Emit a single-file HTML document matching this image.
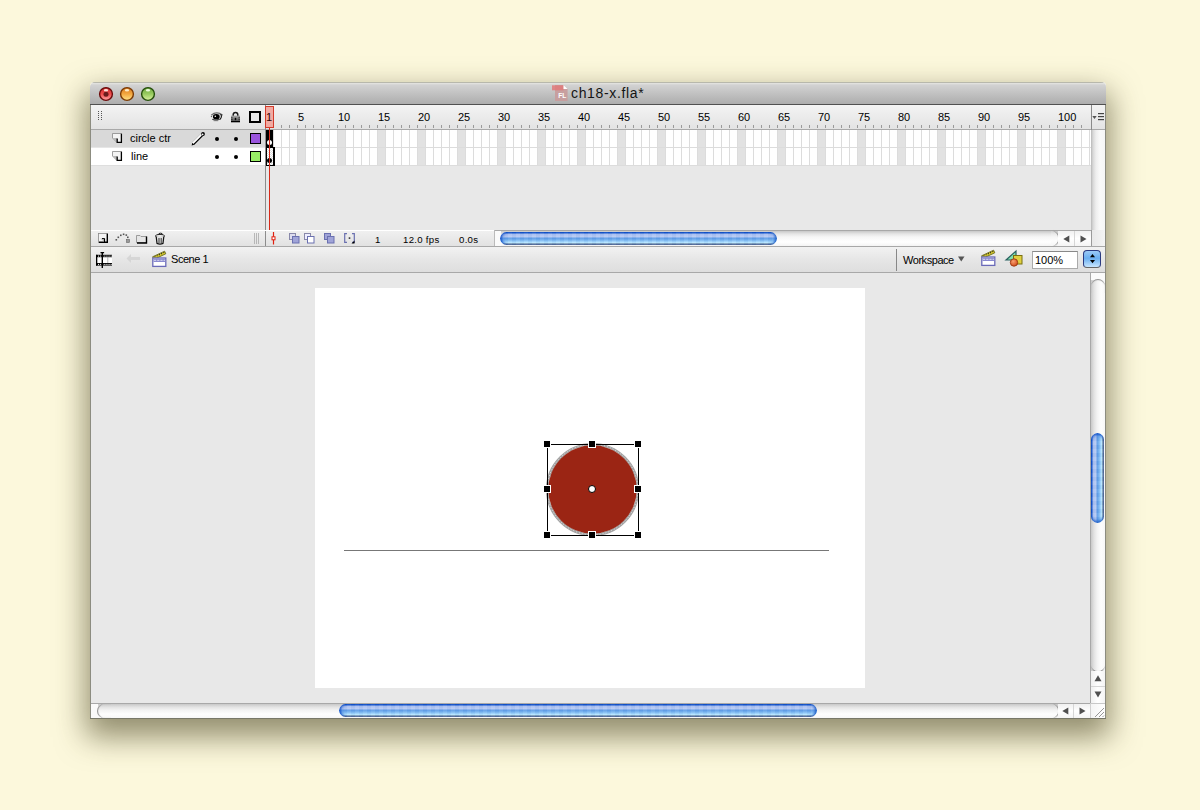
<!DOCTYPE html>
<html><head><meta charset="utf-8"><style>
*{margin:0;padding:0;box-sizing:border-box}
html,body{width:1200px;height:810px;overflow:hidden;background:#fcf8dc;font-family:"Liberation Sans",sans-serif;font-size:11px;color:#000}
.a{position:absolute}
svg{position:absolute;overflow:visible}
#shadow{left:90px;top:82px;width:1016px;height:637px;box-shadow:0 14px 30px 4px rgba(60,55,20,0.55);border-radius:4px 4px 0 0}
#win{left:91px;top:82px;width:1015px;height:637px;background:#e8e8e8;border-radius:4px 4px 0 0;overflow:hidden}
.tb{width:14px;height:14px;border-radius:50%;top:87px}
.t11{font-size:11px;line-height:13px;white-space:nowrap}
.t10{font-size:10px;line-height:12px;white-space:nowrap}
</style></head><body>
<div class="a" id="shadow"></div>
<div class="a" id="win"></div>
<div class="a" style="left:90px;top:105px;width:1px;height:614px;background:#8c8c80"></div>
<div class="a" style="left:1105px;top:105px;width:1px;height:614px;background:#8c8c80"></div>
<div class="a" style="left:90px;top:718px;width:1016px;height:1px;background:#777768"></div>
<div class="a" style="left:90px;top:82px;width:1016px;height:23px;background:linear-gradient(#b8b8ac 0,#b8b8ac 1px,#e6e6e2 1px,#d2d2d2 3px,#adadad);border-bottom:1px solid #505050;border-radius:5px 5px 0 0"></div>
<svg style="left:99px;top:87px" width="14" height="14" viewBox="0 0 14 14"><defs><linearGradient id="g99" x1="0" y1="0" x2="0" y2="1"><stop offset="0" stop-color="#c83030"/><stop offset=".5" stop-color="#f04a4a"/><stop offset="1" stop-color="#ffa8a8"/></linearGradient></defs><circle cx="7" cy="7" r="6.4" fill="url(#g99)" stroke="#6a0c0c" stroke-width="1.4"/><ellipse cx="7" cy="3.3" rx="2.2" ry="1.3" fill="#ffe8e0" opacity=".95"/><circle cx="7" cy="7.3" r="2.5" fill="#6a1c1c"/></svg>
<svg style="left:120px;top:87px" width="14" height="14" viewBox="0 0 14 14"><defs><linearGradient id="g120" x1="0" y1="0" x2="0" y2="1"><stop offset="0" stop-color="#d87a20"/><stop offset=".5" stop-color="#f4a840"/><stop offset="1" stop-color="#ffe488"/></linearGradient></defs><circle cx="7" cy="7" r="6.4" fill="url(#g120)" stroke="#7a3a06" stroke-width="1.4"/><ellipse cx="7" cy="3.3" rx="2.2" ry="1.3" fill="#fff0d0" opacity=".95"/></svg>
<svg style="left:141px;top:87px" width="14" height="14" viewBox="0 0 14 14"><defs><linearGradient id="g141" x1="0" y1="0" x2="0" y2="1"><stop offset="0" stop-color="#70a840"/><stop offset=".5" stop-color="#98cc60"/><stop offset="1" stop-color="#dcf2a0"/></linearGradient></defs><circle cx="7" cy="7" r="6.4" fill="url(#g141)" stroke="#244e0c" stroke-width="1.4"/><ellipse cx="7" cy="3.3" rx="2.2" ry="1.3" fill="#f0ffe0" opacity=".95"/></svg>
<svg style="left:549px;top:83px" width="22" height="20" viewBox="0 0 22 20"><path d="M6 2H14.5L18.6 6.1V18H6Z" fill="#c89c9c" opacity=".92"/><rect x="3" y="2.3" width="11.5" height="5" fill="#e07a7a" opacity=".85"/><path d="M14.5 2V6.1H18.6Z" fill="#fff"/><text x="9.3" y="15.2" font-family="Liberation Sans" font-size="6.6" font-weight="bold" fill="#fff">FL</text></svg>
<div class="a" style="left:571px;top:85px;font-size:14px;letter-spacing:0.65px;line-height:16px;color:#141414">ch18-x.fla*</div>
<div class="a" style="left:91px;top:105px;width:1000px;height:24px;background:linear-gradient(#f3f3f3,#e3e3e3)"></div>
<div class="a" style="left:91px;top:129px;width:1000px;height:1px;background:#a9a9a9"></div>
<svg style="left:97px;top:110px" width="6" height="11" viewBox="0 0 6 11"><rect x="1" y="1" width="1" height="1" fill="#555"/><rect x="1" y="3" width="1" height="1" fill="#555"/><rect x="1" y="5" width="1" height="1" fill="#555"/><rect x="1" y="7" width="1" height="1" fill="#555"/><rect x="1" y="9" width="1" height="1" fill="#555"/><rect x="4" y="1" width="1" height="1" fill="#555"/><rect x="4" y="3" width="1" height="1" fill="#555"/><rect x="4" y="5" width="1" height="1" fill="#555"/><rect x="4" y="7" width="1" height="1" fill="#555"/><rect x="4" y="9" width="1" height="1" fill="#555"/></svg>
<div class="a" style="left:1091px;top:105px;width:1px;height:25px;background:#8a8a8a"></div>
<div class="a" style="left:1092px;top:105px;width:13px;height:24px;background:linear-gradient(#f3f3f3,#e3e3e3)"></div>
<div class="a" style="left:1092px;top:129px;width:13px;height:1px;background:#a9a9a9"></div>
<div class="a" style="left:1091px;top:130px;width:14px;height:100px;background:linear-gradient(to right,#b8b8b8,#d8d8d8 2px,#eeeeee 5px,#fafafa 9px,#f6f6f6)"></div>
<svg style="left:1092px;top:112px" width="13" height="9" viewBox="0 0 13 9"><path d="M0.3 4H4.7L2.5 7Z" fill="#555"/><rect x="6" y="1" width="6" height="1.2" fill="#444"/><rect x="6" y="4" width="6" height="1.2" fill="#444"/><rect x="6" y="7" width="6" height="1.2" fill="#444"/></svg>
<svg style="left:209px;top:110px" width="16" height="13" viewBox="0 0 16 13"><path d="M2.3 5.2Q7.6 0.6 13.6 5.2" stroke="#6a6a6a" stroke-width="1.4" fill="none"/><path d="M3.6 5Q7.6 2.6 11.8 4.6" stroke="#aaa" stroke-width="0.7" fill="none"/><ellipse cx="7.3" cy="6.7" rx="3.4" ry="2.8" fill="#000"/><circle cx="6.3" cy="6.3" r="0.8" fill="#fff"/><path d="M11.6 4.2Q13.6 6.8 10.8 9.6" stroke="#111" stroke-width="1.1" fill="none"/><path d="M3.2 9.3Q7 11.2 10.8 9.3" stroke="#222" stroke-width="0.9" fill="none"/><path d="M4.6 10.7H9.2" stroke="#777" stroke-width="0.9"/><circle cx="2.4" cy="6.6" r="0.6" fill="#444"/></svg>
<svg style="left:231px;top:111px" width="10" height="12" viewBox="0 0 10 12"><path d="M2.2 5.2V3.7A2.3 2.3 0 0 1 6.8 3.7V5.2" stroke="#1a1a1a" stroke-width="1.5" fill="none"/><defs><linearGradient id="lg" x1="0" y1="0" x2="0" y2="1"><stop offset="0" stop-color="#a8a8a8"/><stop offset="1" stop-color="#4a4a4a"/></linearGradient></defs><rect x="0" y="4.6" width="9" height="6.4" fill="url(#lg)"/><path d="M0 6.8H1.6M0 8.6H1.6M7.4 6.8H9M7.4 8.6H9" stroke="#222" stroke-width="0.8"/><rect x="0" y="10" width="9" height="1.3" fill="#000"/><ellipse cx="4.5" cy="8" rx="0.8" ry="1.2" fill="#000"/></svg>
<div class="a" style="left:249px;top:111px;width:12px;height:12px;border:2px solid #000;background:#e8e8e8"></div>
<div class="a" style="left:91px;top:130px;width:174px;height:17px;background:#d9d9d9"></div>
<div class="a" style="left:91px;top:147px;width:174px;height:1px;background:#e6e6e6"></div>
<div class="a" style="left:91px;top:148px;width:174px;height:17px;background:#fff"></div>
<div class="a" style="left:91px;top:165px;width:174px;height:1px;background:#dedede"></div>
<div class="a t11" style="left:130px;top:132px">circle ctr</div>
<div class="a t11" style="left:131px;top:150px">line</div>
<svg style="left:112px;top:133px" width="10" height="10" viewBox="0 0 10 10"><path d="M0.5 0.5H9.5V9.5H5L0.5 5Z" fill="#f4f4f4" stroke="#888" stroke-width="0.8"/><path d="M0.5 5H5V9.5Z" fill="#b8b8b8"/><path d="M9.4 0.8V9.4H5.2V5.4" stroke="#000" stroke-width="1.3" fill="none"/></svg>
<svg style="left:112px;top:151px" width="10" height="10" viewBox="0 0 10 10"><path d="M0.5 0.5H9.5V9.5H5L0.5 5Z" fill="#f4f4f4" stroke="#888" stroke-width="0.8"/><path d="M0.5 5H5V9.5Z" fill="#b8b8b8"/><path d="M9.4 0.8V9.4H5.2V5.4" stroke="#000" stroke-width="1.3" fill="none"/></svg>
<svg style="left:190px;top:131px" width="16" height="16" viewBox="0 0 16 16"><path d="M2.6 12.4L12.4 2.6" stroke="#fff" stroke-width="2.4"/><path d="M1.9 11.6L11.6 1.9" stroke="#aaa" stroke-width="0.7"/><path d="M3.6 13.6L13.6 3.6" stroke="#000" stroke-width="1.3"/><path d="M1.6 14.4L2.3 11.8L4.2 13.7Z" fill="#000"/><circle cx="13" cy="3" r="1.9" fill="#000"/><circle cx="12.6" cy="3.4" r="0.9" fill="#fff"/></svg>
<div class="a" style="left:266px;top:130px;width:825px;height:36px;background:#fff"></div>
<div class="a" style="left:297px;top:130px;width:9px;height:35px;background:#e2e2e2"></div>
<div class="a" style="left:337px;top:130px;width:9px;height:35px;background:#e2e2e2"></div>
<div class="a" style="left:377px;top:130px;width:9px;height:35px;background:#e2e2e2"></div>
<div class="a" style="left:417px;top:130px;width:9px;height:35px;background:#e2e2e2"></div>
<div class="a" style="left:457px;top:130px;width:9px;height:35px;background:#e2e2e2"></div>
<div class="a" style="left:497px;top:130px;width:9px;height:35px;background:#e2e2e2"></div>
<div class="a" style="left:537px;top:130px;width:9px;height:35px;background:#e2e2e2"></div>
<div class="a" style="left:577px;top:130px;width:9px;height:35px;background:#e2e2e2"></div>
<div class="a" style="left:617px;top:130px;width:9px;height:35px;background:#e2e2e2"></div>
<div class="a" style="left:657px;top:130px;width:9px;height:35px;background:#e2e2e2"></div>
<div class="a" style="left:697px;top:130px;width:9px;height:35px;background:#e2e2e2"></div>
<div class="a" style="left:737px;top:130px;width:9px;height:35px;background:#e2e2e2"></div>
<div class="a" style="left:777px;top:130px;width:9px;height:35px;background:#e2e2e2"></div>
<div class="a" style="left:817px;top:130px;width:9px;height:35px;background:#e2e2e2"></div>
<div class="a" style="left:857px;top:130px;width:9px;height:35px;background:#e2e2e2"></div>
<div class="a" style="left:897px;top:130px;width:9px;height:35px;background:#e2e2e2"></div>
<div class="a" style="left:937px;top:130px;width:9px;height:35px;background:#e2e2e2"></div>
<div class="a" style="left:977px;top:130px;width:9px;height:35px;background:#e2e2e2"></div>
<div class="a" style="left:1017px;top:130px;width:9px;height:35px;background:#e2e2e2"></div>
<div class="a" style="left:1057px;top:130px;width:9px;height:35px;background:#e2e2e2"></div>
<div class="a" style="left:265px;top:130px;width:826px;height:35px;background:repeating-linear-gradient(to right,#dcdcdc 0 1px,transparent 1px 8px)"></div>
<div class="a" style="left:265px;top:147px;width:826px;height:1px;background:#dcdcdc"></div>
<div class="a" style="left:265px;top:165px;width:826px;height:1px;background:#dcdcdc"></div>
<div class="a" style="left:281px;top:125px;width:801px;height:3px;background:repeating-linear-gradient(to right,#9a9a9a 0 1px,transparent 1px 8px)"></div>
<div class="a t11" style="left:298px;top:111px">5</div>
<div class="a t11" style="left:338px;top:111px">10</div>
<div class="a t11" style="left:378px;top:111px">15</div>
<div class="a t11" style="left:418px;top:111px">20</div>
<div class="a t11" style="left:458px;top:111px">25</div>
<div class="a t11" style="left:498px;top:111px">30</div>
<div class="a t11" style="left:538px;top:111px">35</div>
<div class="a t11" style="left:578px;top:111px">40</div>
<div class="a t11" style="left:618px;top:111px">45</div>
<div class="a t11" style="left:658px;top:111px">50</div>
<div class="a t11" style="left:698px;top:111px">55</div>
<div class="a t11" style="left:738px;top:111px">60</div>
<div class="a t11" style="left:778px;top:111px">65</div>
<div class="a t11" style="left:818px;top:111px">70</div>
<div class="a t11" style="left:858px;top:111px">75</div>
<div class="a t11" style="left:898px;top:111px">80</div>
<div class="a t11" style="left:938px;top:111px">85</div>
<div class="a t11" style="left:978px;top:111px">90</div>
<div class="a t11" style="left:1018px;top:111px">95</div>
<div class="a t11" style="left:1058px;top:111px">100</div>
<div class="a" style="left:265px;top:105px;width:1px;height:142px;background:#8c8c8c"></div>
<div class="a" style="left:266px;top:130px;width:7px;height:18px;background:#000"></div>
<div class="a" style="left:267px;top:140px;width:5px;height:5px;border-radius:50%;background:#fff"></div>
<div class="a" style="left:266px;top:147px;width:9px;height:19px;border:1px solid #000;border-right-width:2px;background:repeating-conic-gradient(#ddd 0 25%,#fff 0 50%) 0 0/2px 2px"></div>
<div class="a" style="left:267px;top:158px;width:5px;height:5px;border-radius:50%;background:#000"></div>
<div class="a" style="left:265px;top:106px;width:9px;height:22px;background:#f2aaa2;border:1px solid #d23a2a"></div>
<div class="a t11" style="left:266px;top:111px;color:#300">1</div>
<div class="a" style="left:269px;top:128px;width:1px;height:102px;background:#d82a1a"></div>
<div class="a" style="left:250px;top:133px;width:11px;height:11px;border:1px solid #000;background:#9a55dd"></div>
<div class="a" style="left:250px;top:151px;width:11px;height:11px;border:1px solid #000;background:#99ee66"></div>
<div class="a" style="left:215px;top:137px;width:4px;height:4px;border-radius:50%;background:#000"></div>
<div class="a" style="left:234px;top:137px;width:4px;height:4px;border-radius:50%;background:#000"></div>
<div class="a" style="left:215px;top:155px;width:4px;height:4px;border-radius:50%;background:#000"></div>
<div class="a" style="left:234px;top:155px;width:4px;height:4px;border-radius:50%;background:#000"></div>
<div class="a" style="left:91px;top:230px;width:1014px;height:17px;background:linear-gradient(#fff 0,#fff 1px,#f0f0f0 1px,#e2e2e2);border-bottom:1px solid #a8a8a8"></div>
<div class="a" style="left:265px;top:231px;width:1px;height:15px;background:#8c8c8c"></div>
<svg style="left:98px;top:233px" width="11" height="11" viewBox="0 0 11 11"><rect x="0.5" y="0.5" width="9" height="9" fill="#f4f4f4" stroke="#888" stroke-width="0.8"/><path d="M9.3 0.8V9.3H1" stroke="#000" stroke-width="1.4" fill="none"/><path d="M2 5.5H6.5V9L2 5.5Z" fill="#c8c8c8"/><path d="M6.5 5.5V9" stroke="#000" stroke-width="1.2"/><path d="M4 5.6H6.6" stroke="#000" stroke-width="1"/></svg>
<svg style="left:115px;top:232px" width="15" height="12" viewBox="0 0 15 12"><g fill="#555"><rect x="0.5" y="7" width="1.6" height="1.6"/><rect x="2.5" y="4.5" width="1.6" height="1.6"/><rect x="5" y="2.5" width="1.6" height="1.6"/><rect x="7.8" y="1.5" width="1.6" height="1.6"/><rect x="10.5" y="2.3" width="1.6" height="1.6"/><rect x="12" y="4.5" width="1.6" height="1.6"/></g><rect x="11.5" y="7.5" width="3" height="3" fill="#999" stroke="#666" stroke-width="0.6"/></svg>
<svg style="left:136px;top:234px" width="12" height="10" viewBox="0 0 12 10"><path d="M0.5 1.5H4L5 2.5H10.5V8.5H0.5Z" fill="#e6e6e6" stroke="#888" stroke-width="0.8"/><path d="M10.5 2.5V9H1" stroke="#000" stroke-width="1.4" fill="none"/></svg>
<svg style="left:155px;top:233px" width="11" height="12" viewBox="0 0 11 12"><path d="M3.5 1.5A2 1.3 0 0 1 7.5 1.5" stroke="#222" stroke-width="1" fill="none"/><ellipse cx="5" cy="3" rx="4.6" ry="1.6" fill="#eee" stroke="#222" stroke-width="1"/><path d="M1.2 3.6L2 10.4Q5 11.8 8 10.4L8.8 3.6" fill="#e0e0e0" stroke="#111" stroke-width="1.2"/><path d="M4 5V10M6.2 5V10" stroke="#222" stroke-width="0.9"/></svg>
<svg style="left:253px;top:233px" width="7" height="12" viewBox="0 0 7 12"><path d="M1.5 0V11M3.5 0V11M5.5 0V11" stroke="#aaa" stroke-width="0.8"/></svg>
<svg style="left:270px;top:232px" width="7" height="13" viewBox="0 0 7 13"><path d="M3.5 0V12.5" stroke="#e02010" stroke-width="1.2"/><rect x="2" y="4.8" width="3" height="3" fill="#fff" stroke="#e02010" stroke-width="1"/></svg>
<svg style="left:289px;top:233px" width="11" height="11" viewBox="0 0 11 11"><rect x="0.5" y="0.5" width="6" height="6" fill="#dde" stroke="#88a" stroke-width="1"/><rect x="3.5" y="3.5" width="6.5" height="6.5" fill="#a0a4d8" stroke="#6a70b0" stroke-width="1"/></svg>
<svg style="left:304px;top:233px" width="11" height="11" viewBox="0 0 11 11"><rect x="0.5" y="0.5" width="6" height="6" fill="#eef" stroke="#88a" stroke-width="1"/><rect x="3.5" y="3.5" width="6.5" height="6.5" fill="#fff" stroke="#6a70b0" stroke-width="1"/></svg>
<svg style="left:324px;top:233px" width="11" height="11" viewBox="0 0 11 11"><rect x="0.5" y="0.5" width="6" height="6" fill="#a0a4d8" stroke="#6a70b0" stroke-width="1"/><rect x="3.5" y="3.5" width="6.5" height="6.5" fill="#a0a4d8" stroke="#6a70b0" stroke-width="1"/></svg>
<svg style="left:344px;top:233px" width="11" height="11" viewBox="0 0 11 11"><path d="M3 0.7H0.7V9.3H3M8 0.7H10.3V9.3H8" stroke="#6a70b0" stroke-width="1.2" fill="none"/><rect x="4.7" y="4.3" width="1.6" height="1.6" fill="#333"/><path d="M7.5 10.5L10.5 7.5V10.5Z" fill="#000"/></svg>
<div class="a t10" style="left:375px;top:233.5px;font-size:9.6px;letter-spacing:0.3px">1</div>
<div class="a t10" style="left:403px;top:233.5px;font-size:9.6px;letter-spacing:0.3px">12.0 fps</div>
<div class="a t10" style="left:459px;top:233.5px;font-size:9.6px;letter-spacing:0.3px">0.0s</div>
<div class="a" style="left:494px;top:230px;width:597px;height:16px;background:linear-gradient(#a8a8a8 0,#a8a8a8 1px,#c8c8c8 1px,#e6e6e6 4px,#f6f6f6 7px,#fff 12px,#f4f4f4);border-left:1px solid #bbb"></div>
<div class="a" style="left:495px;top:231px;width:6px;height:15px;background:#fafafa"></div>
<div class="a" style="left:500px;top:232px;width:277px;height:13px;border-radius:7px;background:repeating-linear-gradient(to right,rgba(255,255,255,.06) 0 4px,rgba(0,50,150,.035) 4px 8px),linear-gradient(#0a48c0 0,#1a58cc 1px,#a8bef0 2px,#b8ccf4 5px,#5c9ae6 6px,#78b4f0 8px,#a8dcff 10px,#c0ecff 11px,#50607a 12px,#80889a 13px);box-shadow:inset 3px 0 3px -1px #1050c8,inset -3px 0 3px -1px #2060c8"></div>
<div class="a" style="left:91px;top:247px;width:1014px;height:25px;background:linear-gradient(#f2f2f2,#e6e6e6 50%,#dedede)"></div>
<div class="a" style="left:91px;top:272px;width:1014px;height:1px;background:#a8a8a8"></div>
<svg style="left:96px;top:252px" width="17" height="16" viewBox="0 0 17 16"><rect x="0.5" y="3" width="15.5" height="10.5" fill="#fff"/><rect x="0" y="2.8" width="16" height="2.4" fill="#000"/><rect x="0" y="11" width="16" height="2.6" fill="#000"/><rect x="0" y="2.8" width="1.3" height="10.8" fill="#000"/><g fill="#fff"><rect x="2.0" y="3.6" width="1.1" height="1"/><rect x="2.0" y="11.9" width="1.1" height="1"/><rect x="4.1" y="3.6" width="1.1" height="1"/><rect x="4.1" y="11.9" width="1.1" height="1"/><rect x="6.2" y="3.6" width="1.1" height="1"/><rect x="6.2" y="11.9" width="1.1" height="1"/><rect x="8.3" y="3.6" width="1.1" height="1"/><rect x="8.3" y="11.9" width="1.1" height="1"/><rect x="10.4" y="3.6" width="1.1" height="1"/><rect x="10.4" y="11.9" width="1.1" height="1"/><rect x="12.5" y="3.6" width="1.1" height="1"/><rect x="12.5" y="11.9" width="1.1" height="1"/><rect x="14.600000000000001" y="3.6" width="1.1" height="1"/><rect x="14.600000000000001" y="11.9" width="1.1" height="1"/></g><rect x="5.6" y="0.5" width="1.4" height="15.5" fill="#000"/><rect x="4.5" y="0" width="3.6" height="1.3" fill="#000"/><rect x="11.5" y="5.2" width="0.7" height="5.8" fill="#999"/></svg>
<svg style="left:126px;top:253px" width="15" height="11" viewBox="0 0 15 11"><path d="M0.5 5.5L5 1V4H14V7H5V10Z" fill="#d6d6d6"/></svg>
<svg style="left:152px;top:251px" width="15" height="17" viewBox="0 0 15 17"><path d="M0.6 5.8L12.6 0.2L13.8 2.8L1.8 8.4Z" fill="#d8cc30" stroke="#5a5a10" stroke-width="0.8"/><circle cx="3.0" cy="5.8" r="0.6" fill="#222"/><circle cx="5.2" cy="4.75" r="0.6" fill="#222"/><circle cx="7.4" cy="3.6999999999999997" r="0.6" fill="#222"/><circle cx="9.600000000000001" cy="2.6499999999999995" r="0.6" fill="#222"/><circle cx="11.8" cy="1.5999999999999996" r="0.6" fill="#222"/><rect x="0.8" y="7" width="13" height="8.4" fill="#fff" stroke="#6a6ab8" stroke-width="1.3"/><rect x="1.5" y="7.6" width="11.6" height="3.4" fill="#8a8ad0"/><path d="M2 9.3H13" stroke="#e4e4f4" stroke-width="0.9" stroke-dasharray="2.2 1"/></svg>
<div class="a t11" style="left:171px;top:253px;letter-spacing:-0.45px">Scene 1</div>
<div class="a" style="left:896px;top:249px;width:1px;height:22px;background:#888"></div>
<div class="a t11" style="left:903px;top:254px;letter-spacing:-0.45px">Workspace</div>
<svg style="left:958px;top:256px" width="7" height="6" viewBox="0 0 7 6"><path d="M0 0.5H6.5L3.25 5.5Z" fill="#555"/></svg>
<svg style="left:981px;top:250px" width="15" height="17" viewBox="0 0 15 17"><path d="M0.6 5.8L12.6 0.2L13.8 2.8L1.8 8.4Z" fill="#d8cc30" stroke="#5a5a10" stroke-width="0.8"/><circle cx="3.0" cy="5.8" r="0.6" fill="#222"/><circle cx="5.2" cy="4.75" r="0.6" fill="#222"/><circle cx="7.4" cy="3.6999999999999997" r="0.6" fill="#222"/><circle cx="9.600000000000001" cy="2.6499999999999995" r="0.6" fill="#222"/><circle cx="11.8" cy="1.5999999999999996" r="0.6" fill="#222"/><rect x="0.8" y="7" width="13" height="8.4" fill="#fff" stroke="#6a6ab8" stroke-width="1.3"/><rect x="1.5" y="7.6" width="11.6" height="3.4" fill="#8a8ad0"/><path d="M2 9.3H13" stroke="#e4e4f4" stroke-width="0.9" stroke-dasharray="2.2 1"/></svg>
<svg style="left:1005px;top:250px" width="18" height="18" viewBox="0 0 18 18"><path d="M1 10L11 1V10Z" fill="#80e0b0" stroke="#2a6060" stroke-width="1.2"/><rect x="8.5" y="5.5" width="8.5" height="8.5" fill="#e0d040" stroke="#7a7010" stroke-width="1"/><defs><radialGradient id="oc" cx=".4" cy=".35" r=".7"><stop offset="0" stop-color="#f8a070"/><stop offset="1" stop-color="#d04818"/></radialGradient></defs><circle cx="9" cy="12.5" r="3.7" fill="url(#oc)" stroke="#983810" stroke-width="0.9"/></svg>
<div class="a" style="left:1032px;top:251px;width:46px;height:18px;background:#fff;border:1px solid #aaa;border-top-color:#888"></div>
<div class="a t11" style="left:1035px;top:254px">100%</div>
<div class="a" style="left:1083px;top:250px;width:18px;height:18px;border-radius:4px;background:linear-gradient(#9ccaf6,#6aaef0 45%,#7ab8f2 55%,#c8e6ff);border:1px solid #2a3a80;border-bottom-color:#666"></div>
<svg style="left:1089px;top:253px" width="7" height="12" viewBox="0 0 7 12"><path d="M3.5 1L6 4.2H1Z" fill="#000"/><path d="M1 7H6L3.5 10.2Z" fill="#000"/></svg>
<div class="a" style="left:315px;top:288px;width:550px;height:400px;background:#fff"></div>
<div class="a" style="left:344px;top:550px;width:485px;height:1px;background:#777"></div>
<svg style="left:540px;top:437px" width="105" height="105" viewBox="0 0 105 105"><circle cx="52.5" cy="52.5" r="45.3" fill="none" stroke="#a4a4a4" stroke-width="2.6"/><circle cx="52.5" cy="52.5" r="45.3" fill="none" stroke="#fff" stroke-width="0.9" stroke-dasharray="0.8 2.2" opacity=".9"/><circle cx="52.5" cy="52.5" r="44.2" fill="#9b2514"/></svg>
<div class="a" style="left:547px;top:444px;width:92px;height:92px;border:1px solid #000"></div>
<div class="a" style="left:544px;top:441px;width:6px;height:6px;background:#000;box-shadow:0 0 0 1px #fff"></div>
<div class="a" style="left:544px;top:486px;width:6px;height:6px;background:#000;box-shadow:0 0 0 1px #fff"></div>
<div class="a" style="left:544px;top:532px;width:6px;height:6px;background:#000;box-shadow:0 0 0 1px #fff"></div>
<div class="a" style="left:589px;top:441px;width:6px;height:6px;background:#000;box-shadow:0 0 0 1px #fff"></div>
<div class="a" style="left:589px;top:532px;width:6px;height:6px;background:#000;box-shadow:0 0 0 1px #fff"></div>
<div class="a" style="left:635px;top:441px;width:6px;height:6px;background:#000;box-shadow:0 0 0 1px #fff"></div>
<div class="a" style="left:635px;top:486px;width:6px;height:6px;background:#000;box-shadow:0 0 0 1px #fff"></div>
<div class="a" style="left:635px;top:532px;width:6px;height:6px;background:#000;box-shadow:0 0 0 1px #fff"></div>
<div class="a" style="left:588px;top:485px;width:8px;height:8px;border-radius:50%;background:#fff;border:1px solid #000"></div>
<div class="a" style="left:1090px;top:273px;width:15px;height:430px;background:linear-gradient(to right,#c8c8c8,#e2e2e2 3px,#f2f2f2 6px,#fdfdfd 10px,#f6f6f6 15px);border-left:1px solid #a8a8a8"></div>
<div class="a" style="left:1091px;top:273px;width:14px;height:7px;background:#fafafa"></div>
<div class="a" style="left:1091px;top:279px;width:14px;height:14px;border-radius:7px 7px 0 0;background:linear-gradient(to right,#c8c8c8,#e2e2e2 3px,#f2f2f2 6px,#fdfdfd 10px,#f6f6f6 15px);box-shadow:inset 0 1.5px 1px -0.5px #8a8a8a"></div>
<div class="a" style="left:1091px;top:664px;width:14px;height:7px;border-radius:0 0 7px 7px;background:linear-gradient(to right,#c8c8c8,#e2e2e2 3px,#f2f2f2 6px,#fdfdfd 10px,#f6f6f6 15px);box-shadow:0 1.5px 1.2px -0.3px #8a8a8a"></div>
<div class="a" style="left:1091px;top:671px;width:14px;height:32px;background:linear-gradient(to right,#f0f0f0,#fff 50%,#f4f4f4)"></div>
<div class="a" style="left:1091px;top:686px;width:14px;height:1px;background:#d6d6d6"></div>
<svg style="left:1094px;top:675px" width="8" height="7" viewBox="0 0 8 7"><path d="M4 0.3L7.5 6.3H0.5Z" fill="#505050"/></svg>
<svg style="left:1094px;top:691px" width="8" height="7" viewBox="0 0 8 7"><path d="M0.5 0.5H7.5L4 6.5Z" fill="#505050"/></svg>
<div class="a" style="left:1091px;top:433px;width:13px;height:90px;border-radius:7px;background:repeating-linear-gradient(rgba(255,255,255,.06) 0 4px,rgba(0,50,150,.035) 4px 8px),linear-gradient(to right,#0a48c0 0,#1a58cc 1px,#a8bef0 2px,#b8ccf4 5px,#5c9ae6 6px,#78b4f0 8px,#a8dcff 10px,#c0ecff 11px,#50607a 12px,#80889a 13px);box-shadow:inset 0 3px 3px -1px #1050c8,inset 0 -3px 3px -1px #2060c8"></div>
<div class="a" style="left:91px;top:703px;width:999px;height:15px;background:linear-gradient(#c8c8c8,#e2e2e2 3px,#f2f2f2 6px,#fdfdfd 10px,#f6f6f6 15px);border-top:1px solid #a8a8a8"></div>
<div class="a" style="left:91px;top:704px;width:7px;height:14px;background:#fafafa"></div>
<div class="a" style="left:97px;top:704px;width:14px;height:14px;border-radius:7px 0 0 7px;background:linear-gradient(#c8c8c8,#e2e2e2 3px,#f2f2f2 6px,#fdfdfd 10px,#f6f6f6 15px);box-shadow:inset 1.5px 0 1px -0.5px #8a8a8a"></div>
<div class="a" style="left:1051px;top:704px;width:7px;height:14px;border-radius:0 7px 7px 0;background:linear-gradient(#c8c8c8,#e2e2e2 3px,#f2f2f2 6px,#fdfdfd 10px,#f6f6f6 15px);box-shadow:1.5px 0 1.2px -0.3px #8a8a8a"></div>
<div class="a" style="left:1058px;top:704px;width:32px;height:14px;background:linear-gradient(#f0f0f0,#fff 50%,#f4f4f4)"></div>
<div class="a" style="left:1073px;top:704px;width:1px;height:14px;background:#d6d6d6"></div>
<svg style="left:1062px;top:707px" width="7" height="8" viewBox="0 0 7 8"><path d="M0.3 4L6.3 0.5V7.5Z" fill="#505050"/></svg>
<svg style="left:1079px;top:707px" width="7" height="8" viewBox="0 0 7 8"><path d="M0.5 0.5L6.5 4L0.5 7.5Z" fill="#505050"/></svg>
<div class="a" style="left:339px;top:704px;width:478px;height:13px;border-radius:7px;background:repeating-linear-gradient(to right,rgba(255,255,255,.06) 0 4px,rgba(0,50,150,.035) 4px 8px),linear-gradient(#0a48c0 0,#1a58cc 1px,#a8bef0 2px,#b8ccf4 5px,#5c9ae6 6px,#78b4f0 8px,#a8dcff 10px,#c0ecff 11px,#50607a 12px,#80889a 13px);box-shadow:inset 3px 0 3px -1px #1050c8,inset -3px 0 3px -1px #2060c8"></div>
<div class="a" style="left:1090px;top:703px;width:15px;height:15px;background:linear-gradient(to right,#f4f4f4,#fff);border-left:1px solid #d0d0d0;border-top:1px solid #c8c8c8"></div>
<svg style="left:1093px;top:706px" width="12" height="12" viewBox="0 0 12 12"><path d="M11 2L2 11M11 6L6 11M11 9.5L9.5 11" stroke="#8a8a8a" stroke-width="0.9"/></svg>
<div class="a" style="left:1051px;top:231px;width:7px;height:15px;border-radius:0 7px 7px 0;background:linear-gradient(#d0d0d0,#eaeaea 3px,#f6f6f6 6px,#fdfdfd 10px,#f6f6f6);box-shadow:1.5px 0 1.2px -0.3px #8a8a8a"></div>
<div class="a" style="left:1058px;top:231px;width:33px;height:15px;background:linear-gradient(#f0f0f0,#fff 50%,#f4f4f4)"></div>
<div class="a" style="left:1074px;top:231px;width:1px;height:15px;background:#d6d6d6"></div>
<svg style="left:1063px;top:235px" width="7" height="8" viewBox="0 0 7 8"><path d="M0.3 4L6.3 0.5V7.5Z" fill="#505050"/></svg>
<svg style="left:1080px;top:235px" width="7" height="8" viewBox="0 0 7 8"><path d="M0.5 0.5L6.5 4L0.5 7.5Z" fill="#505050"/></svg>
<div class="a" style="left:1091px;top:230px;width:1px;height:16px;background:#9a9a9a"></div>
<div class="a" style="left:1092px;top:230px;width:13px;height:16px;background:linear-gradient(to right,#e8e8e8,#f4f4f4)"></div>
</body></html>
